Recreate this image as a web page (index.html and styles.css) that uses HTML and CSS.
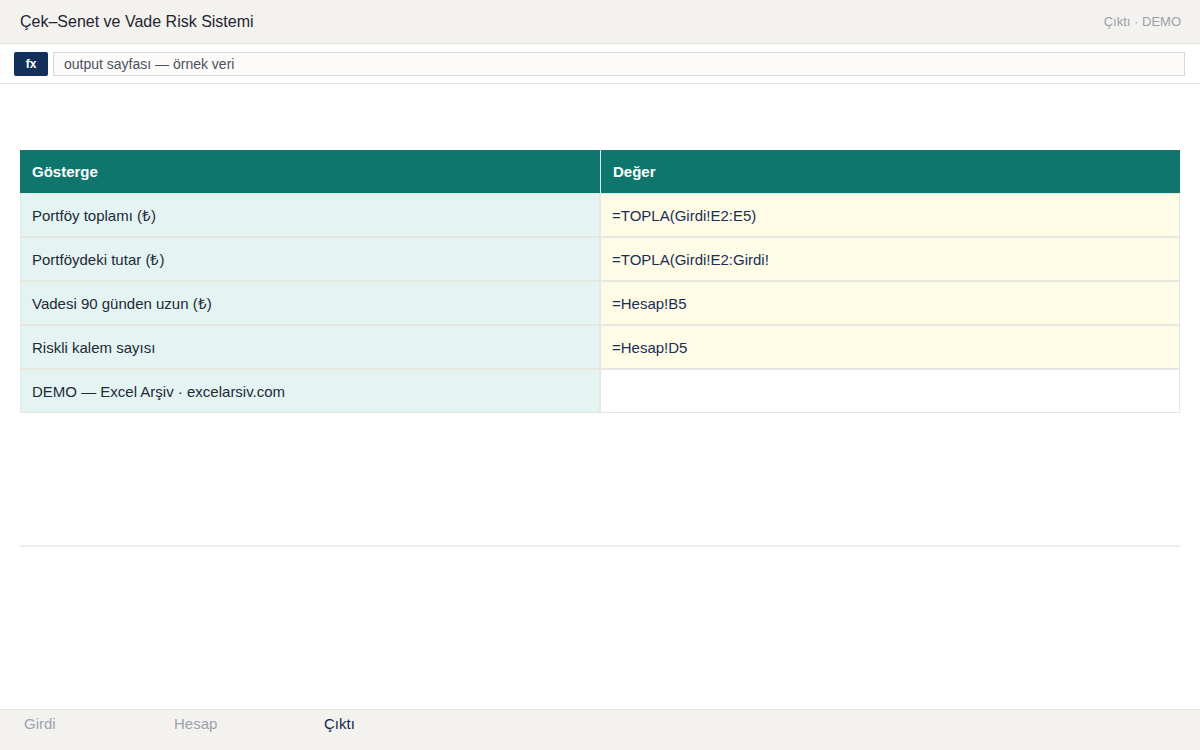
FILE: index.html
```html
<!DOCTYPE html>
<html lang="tr">
<head>
    <meta charset="UTF-8">
    <meta name="viewport" content="width=device-width, initial-scale=1.0">
    <title>Çek–Senet ve Vade Risk Sistemi</title>
    <link rel="stylesheet" href="styles.css">
</head>
<body>
    <div class="top-bar">
        <div class="app-title">Çek–Senet ve Vade Risk Sistemi</div>
        <div class="sheet-name">Çıktı · DEMO</div>
    </div>

    <div class="formula-bar">
        <span class="fx">fx</span>
        <div class="formula-input">output sayfası — örnek veri</div>
    </div>

    <div class="sheet">
        <table class="grid">
            <thead>
                <tr>
                    <th>Gösterge</th>
                    <th>Değer</th>
                </tr>
            </thead>
            <tbody>
                <tr>
                    <td class="label">Portföy toplamı (₺)</td>
                    <td class="value">=TOPLA(Girdi!E2:E5)</td>
                </tr>
                <tr>
                    <td class="label">Portföydeki tutar (₺)</td>
                    <td class="value">=TOPLA(Girdi!E2:Girdi!</td>
                </tr>
                <tr>
                    <td class="label">Vadesi 90 günden uzun (₺)</td>
                    <td class="value">=Hesap!B5</td>
                </tr>
                <tr>
                    <td class="label">Riskli kalem sayısı</td>
                    <td class="value">=Hesap!D5</td>
                </tr>
                <tr>
                    <td class="label">DEMO — Excel Arşiv · excelarsiv.com</td>
                    <td class="empty"></td>
                </tr>
            </tbody>
        </table>
    </div>

    <div class="tabs">
        <span class="tab">Girdi</span>
        <span class="tab">Hesap</span>
        <span class="tab active">Çıktı</span>
    </div>
</body>
</html>
```

FILE: styles.css
```css
html, body {
    height: 100%;
}
body {
    margin: 0;
    font-family: "Liberation Sans", Arial, sans-serif;
    color: #1f2937;
    background-color: #ffffff;
    display: flex;
    flex-direction: column;
}
.top-bar {
    height: 43px;
    display: flex;
    align-items: center;
    justify-content: space-between;
    padding: 0 19px 0 20px;
    background-color: #f3f2ee;
    border-bottom: 1px solid #e6e3dd;
}
.app-title {
    font-size: 16px;
    color: #1f2430;
}
.sheet-name {
    font-size: 13px;
    color: #9ca1ab;
}
.formula-bar {
    height: 39px;
    display: flex;
    align-items: center;
    gap: 5px;
    padding: 0 15px 0 14px;
    border-bottom: 1px solid #e6e3dd;
}
.fx {
    width: 34px;
    height: 24px;
    display: flex;
    align-items: center;
    justify-content: center;
    background-color: #12305a;
    color: #ffffff;
    font-size: 12px;
    font-weight: bold;
    border-radius: 2px;
}
.formula-input {
    flex: 1;
    height: 22px;
    line-height: 22px;
    padding: 0 10px;
    font-size: 14px;
    color: #4b5160;
    background-color: #fcfbf9;
    border: 1px solid #ddd9d2;
}
.sheet {
    flex: 1;
    padding: 66px 20px 0;
}
.grid {
    width: 100%;
    border-collapse: separate;
    border-spacing: 0;
    font-size: 15px;
    padding-bottom: 132px;
    border-bottom: 2px solid #efede9;
}
.grid th {
    height: 43px;
    padding: 0 12px;
    text-align: left;
    font-weight: 600;
    font-size: 15px;
    color: #ffffff;
    background-color: #0f766e;
}
.grid th + th {
    border-left: 1px solid #e4f1ee;
}
.grid td {
    width: 50%;
    height: 42px;
    padding: 0 11px;
    border: 1px solid #e8e6e1;
}
.grid td.label {
    background-color: #e3f4f2;
    color: #1f2937;
}
.grid td.value {
    background-color: #fefbe7;
    color: #1b2f55;
}
.grid td.empty {
    background-color: #ffffff;
}
.tabs {
    height: 40px;
    display: flex;
    padding-left: 24px;
    background-color: #f3f2ee;
    border-top: 1px solid #e6e3dd;
}
.tab {
    width: 150px;
    padding-top: 5px;
    font-size: 15px;
    color: #9ca3af;
}
.tab.active {
    color: #14264a;
}
```
